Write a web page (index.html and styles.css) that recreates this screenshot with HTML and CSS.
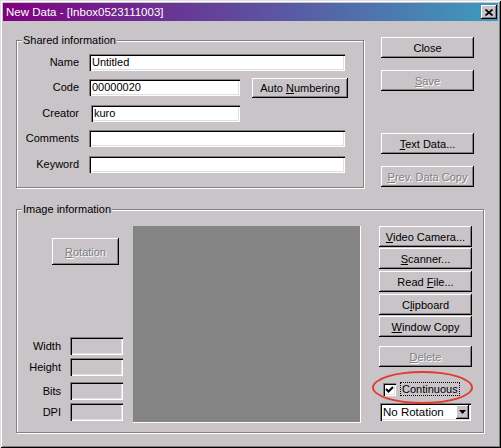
FILE: index.html
```html
<!DOCTYPE html>
<html>
<head>
<meta charset="utf-8">
<title>New Data</title>
<link rel="stylesheet" href="styles.css">
</head>
<body>
<div class="window">
  <div class="titlebar">
    <span class="title">New Data - [Inbox0523111003]</span>
    <span class="tclose"><svg width="8" height="7" viewBox="0 0 8 7"><path d="M0.5 0.5 L7.5 6.5 M7.5 0.5 L0.5 6.5" stroke="#000" stroke-width="1.7" fill="none"/></svg></span>
  </div>

  <div class="top">
    <div class="group g1">
      <div class="legend">Shared information</div>
      <div class="form">
        <label>Name</label>
        <div class="field w256">Untitled</div>
        <label>Code</label>
        <div class="coderow">
          <div class="field w151">00000020</div>
          <button class="btn auto"><span>Auto <u>N</u>umbering</span></button>
        </div>
        <label>Creator</label>
        <div class="field w149 shift">kuro</div>
        <label>Comments</label>
        <div class="field w256"></div>
        <label>Keyword</label>
        <div class="field w256"></div>
      </div>
    </div>
    <div class="side">
      <button class="btn"><span>Close</span></button>
      <button class="btn dis mt12"><span><u>S</u>ave</span></button>
      <button class="btn mt42"><span><u>T</u>ext Data...</span></button>
      <button class="btn dis mt12"><span><u>P</u>rev. Data Copy</span></button>
    </div>
  </div>

  <div class="group g2">
    <div class="legend">Image information</div>
    <div class="g2body">
      <div class="leftcol">
        <button class="btn dis rot"><span><u>R</u>otation</span></button>
        <div class="dims">
          <label class="dl">Width</label><div class="ro"></div>
          <label class="dl">Height</label><div class="ro"></div>
          <label class="dl">Bits</label><div class="ro"></div>
          <label class="dl">DPI</label><div class="ro"></div>
        </div>
      </div>
      <div class="preview"></div>
      <div class="rightcol">
        <button class="btn"><span><u>V</u>ideo Camera...</span></button>
        <button class="btn mt1"><span><u>S</u>canner...</span></button>
        <button class="btn mt2"><span>Read <u>F</u>ile...</span></button>
        <button class="btn mt2"><span>C<u>l</u>ipboard</span></button>
        <button class="btn mt1"><span><u>W</u>indow Copy</span></button>
        <button class="btn dis mt9"><span><u>D</u>elete</span></button>
        <div class="chkrow">
          <span class="chk"><svg width="9" height="9" viewBox="0 0 9 9"><path d="M1 4 L3.5 6.5 L8 2" stroke="#000" stroke-width="2" fill="none"/></svg></span>
          <span class="chklabel">Continuous</span>
          <span class="ellipse"></span>
        </div>
        <div class="select">
          <span class="seltext">No Rotation</span>
          <span class="arrow"><svg width="7" height="4" viewBox="0 0 7 4"><path d="M0 0 H7 L3.5 4 Z" fill="#000"/></svg></span>
        </div>
      </div>
    </div>
  </div>
</div>
</body>
</html>
```

FILE: styles.css
```css
* { box-sizing: border-box; }
html, body { margin: 0; padding: 0; }
body {
  width: 501px;
  height: 448px;
  overflow: hidden;
  font-family: "Liberation Sans", Arial, sans-serif;
  font-size: 11px;
  color: #000;
  background: #c8c4c8;
}
.window {
  width: 501px;
  height: 448px;
  padding: 3px;
  background: #c8c4c8;
  box-shadow: inset 1px 1px #dfdfdf, inset -1px -1px #000, inset 2px 2px #fff, inset -2px -2px #808080;
}
.titlebar {
  height: 18px;
  display: flex;
  align-items: center;
  justify-content: space-between;
  padding: 0 1px 0 3px;
  background: linear-gradient(to right, #800080, #3d9bbd);
  color: #fff;
  font-size: 11.5px;
}
.tclose {
  width: 16px;
  height: 14px;
  display: flex;
  align-items: center;
  justify-content: center;
  background: #c8c4c8;
  box-shadow: inset -1px -1px #000, inset 1px 1px #fff, inset -2px -2px #808080;
}
.top {
  display: flex;
  align-items: flex-start;
  margin-top: 16px;
}
.group {
  border: 1px solid #808080;
  box-shadow: 1px 1px 0 #fff, inset 1px 1px 0 #fff;
}
.g1 {
  margin: 3px 0 0 13px;
  width: 348px;
  height: 148px;
}
.legend {
  margin: -8px 0 0 5px;
  padding: 0 1px;
  width: max-content;
  height: 14px;
  line-height: 14px;
  background: #c8c4c8;
}
.form {
  display: grid;
  grid-template-columns: 62px auto;
  column-gap: 10px;
  grid-template-rows: 25px 26px 25px 26px 17px;
  align-items: start;
  margin-top: 7px;
}
label {
  text-align: right;
  line-height: 17px;
}
.field {
  height: 17px;
  padding: 0 3px;
  line-height: 17px;
  white-space: nowrap;
  background: #fff;
  box-shadow: inset 1px 1px #808080, inset 2px 2px #000, inset -1px -1px #fff, inset -2px -2px #dfdfdf;
}
.w256 { width: 256px; }
.w151 { width: 151px; }
.w149 { width: 149px; }
.shift { margin-left: 2px; }
.coderow {
  display: flex;
  align-items: flex-start;
}
.btn {
  display: flex;
  align-items: center;
  justify-content: center;
  width: 93px;
  height: 21px;
  padding: 0;
  border: 0;
  font: inherit;
  color: #000;
  white-space: nowrap;
  background: #c8c4c8;
  box-shadow: inset -1px -1px #000, inset 1px 1px #fff, inset -2px -2px #808080;
}
.auto {
  width: 96px;
  height: 20px;
  margin: -1px 0 0 12px;
}
.dis {
  color: #808080;
  text-shadow: 1px 1px 0 #fff;
}
.side {
  margin-left: 17px;
  width: 93px;
  display: flex;
  flex-direction: column;
}
.mt1 { margin-top: 1px; }
.mt2 { margin-top: 2px; }
.mt9 { margin-top: 9px; }
.mt12 { margin-top: 12px; }
.mt42 { margin-top: 42px; }
.g2 {
  margin: 21px 0 0 13px;
  width: 468px;
  height: 224px;
}
.g2body {
  display: flex;
  margin-top: 10px;
  height: 197px;
}
.leftcol {
  width: 116px;
  display: flex;
  flex-direction: column;
  align-items: flex-start;
}
.rot {
  width: 67px;
  height: 27px;
  margin: 12px 0 0 35px;
}
.dims {
  margin-top: auto;
  margin-bottom: 2px;
  display: grid;
  grid-template-columns: 44px 53px;
  column-gap: 9px;
  grid-template-rows: 21px 24px 21px 18px;
  align-items: start;
}
.dl { line-height: 18px; }
.ro {
  height: 18px;
  box-shadow: inset 1px 1px #808080, inset 2px 2px #000, inset -1px -1px #fff, inset -2px -2px #dfdfdf;
}
.preview {
  width: 228px;
  height: 197px;
  background: #848484;
  border-right: 1px solid #fff;
  border-bottom: 1px solid #fff;
}
.rightcol {
  margin-left: 18px;
  width: 93px;
  display: flex;
  flex-direction: column;
}
.chkrow {
  position: relative;
  display: flex;
  align-items: center;
  height: 14px;
  margin-top: 15px;
}
.chk {
  width: 13px;
  height: 13px;
  margin-left: 4px;
  display: flex;
  align-items: center;
  justify-content: center;
  background: #fff;
  box-shadow: inset 1px 1px #808080, inset 2px 2px #000, inset -1px -1px #fff, inset -2px -2px #dfdfdf;
}
.chklabel {
  margin-left: 4px;
  padding: 0 1px;
  height: 14px;
  line-height: 12px;
  border: 1px dotted #000;
}
.ellipse {
  position: absolute;
  left: -7px;
  top: -11px;
  width: 101px;
  height: 33px;
  border: 2px solid #e23b2f;
  border-radius: 50%;
}
.select {
  margin: 7px 0 0 1px;
  width: 91px;
  height: 18px;
  padding: 2px;
  display: flex;
  align-items: center;
  background: #fff;
  box-shadow: inset 1px 1px #808080, inset 2px 2px #000, inset -1px -1px #fff, inset -2px -2px #dfdfdf;
}
.seltext {
  flex: 1;
  padding-left: 1px;
  font-size: 11.5px;
}
.arrow {
  width: 13px;
  height: 14px;
  display: flex;
  align-items: center;
  justify-content: center;
  background: #c8c4c8;
  box-shadow: inset -1px -1px #000, inset 1px 1px #fff, inset -2px -2px #808080;
}
```
